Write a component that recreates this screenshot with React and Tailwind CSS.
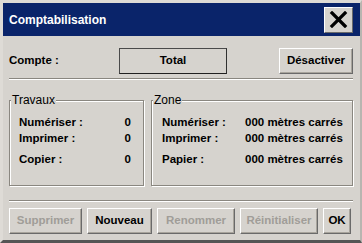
import React from "react";

const font = { fontFamily: '"Liberation Sans", Arial, sans-serif' };

function Btn({ w, children, disabled }) {
  return (
    <div
      className={`${w} h-[26px] flex items-center justify-center whitespace-nowrap border border-t-white border-l-white border-r-[#6a6a6a] border-b-[#6a6a6a] shadow-[inset_-1px_-1px_0_#a8a49c] text-[11.5px] font-bold ${
        disabled ? "text-[#a09d98]" : "text-black"
      }`}
    >
      {children}
    </div>
  );
}

function Group({ title, w, children, pl, pr }) {
  return (
    <div
      className={`relative ${w} h-[86px] border border-[#8a8780] shadow-[1px_1px_0_#fff,inset_1px_1px_0_#fff] ${pl} ${pr} pt-[14px]`}
    >
      <span className="absolute left-[1px] top-[-8px] px-[1px] bg-[#d6d3ce] text-[12px] leading-[14px] text-black">
        {title}
      </span>
      {children}
    </div>
  );
}

function Row({ label, value, extra, labelW, right }) {
  return (
    <div className={`flex h-4 items-center whitespace-nowrap text-[11.5px] font-bold text-black ${extra || ""}`}>
      <span className={`shrink-0 ${labelW || ""}`}>{label}</span>
      <span className={right ? "flex-1 text-right" : "whitespace-nowrap"}>{value}</span>
    </div>
  );
}

export default function App() {
  return (
    <div
      style={font}
      className="w-[362px] h-[243px] bg-[#d6d3ce] border-l-[3px] border-t-[3px] border-r-2 border-b-[3px] border-l-[#dedbd6] border-t-[#dedbd6] border-r-[#b8b5b0] border-b-[#555555] flex flex-col"
    >
      <div className="h-[33px] bg-[#0a246a] flex items-center justify-between pl-[6px] pr-[7px]">
        <span className="text-white text-[12px] font-bold">Comptabilisation</span>
        <div className="w-[29px] h-[26px] bg-[#d6d3ce] border border-t-white border-l-white border-r-[#6a6a6a] border-b-[#6a6a6a] flex items-center justify-center">
          <svg width="19" height="17" viewBox="0 0 19 17">
            <path d="M3 2 L16 15 M16 2 L3 15" stroke="#000" strokeWidth="3.2" strokeLinecap="square" />
          </svg>
        </div>
      </div>

      <div className="flex flex-col pl-[6px] pr-[7px]">
        <div className="mt-[12px] h-[26px] flex items-center">
          <span className="w-[110px] text-[11.5px] font-bold text-black">Compte :</span>
          <div className="w-[108px] h-[26px] flex items-center justify-center border border-[#4a4a4a] border-b-[#202020] border-r-[#303030] text-[11.5px] font-bold text-black">
            Total
          </div>
          <div className="flex-1" />
          <Btn w="w-[74px]">Désactiver</Btn>
        </div>

        <div className="mt-[4px] h-[2px] border-t border-t-[#8a8780] border-b border-b-white" />

        <div className="mt-[20px] flex gap-[7px]">
          <Group title="Travaux" w="w-[135px]" pl="pl-[9px]" pr="pr-[12px]">
            <Row label="Numériser :" value="0" right />
            <Row label="Imprimer :" value="0" right />
            <Row label="Copier :" value="0" right extra="mt-[5px]" />
          </Group>
          <Group title="Zone" w="flex-1" pl="pl-[10px]" pr="pr-[2px]">
            <Row label="Numériser :" value="000 mètres carrés" labelW="w-[83px]" />
            <Row label="Imprimer :" value="000 mètres carrés" labelW="w-[83px]" />
            <Row label="Papier :" value="000 mètres carrés" labelW="w-[83px]" extra="mt-[5px]" />
          </Group>
        </div>

        <div className="mt-[14px] h-[2px] border-t border-t-[#8a8780] border-b border-b-white" />

        <div className="mt-[6px] flex gap-[5px]">
          <Btn w="w-[73px]" disabled>Supprimer</Btn>
          <Btn w="w-[65px]">Nouveau</Btn>
          <Btn w="w-[78px]" disabled>Renommer</Btn>
          <Btn w="w-[78px]" disabled>Réinitialiser</Btn>
          <Btn w="w-[28px]">OK</Btn>
        </div>
      </div>
    </div>
  );
}
